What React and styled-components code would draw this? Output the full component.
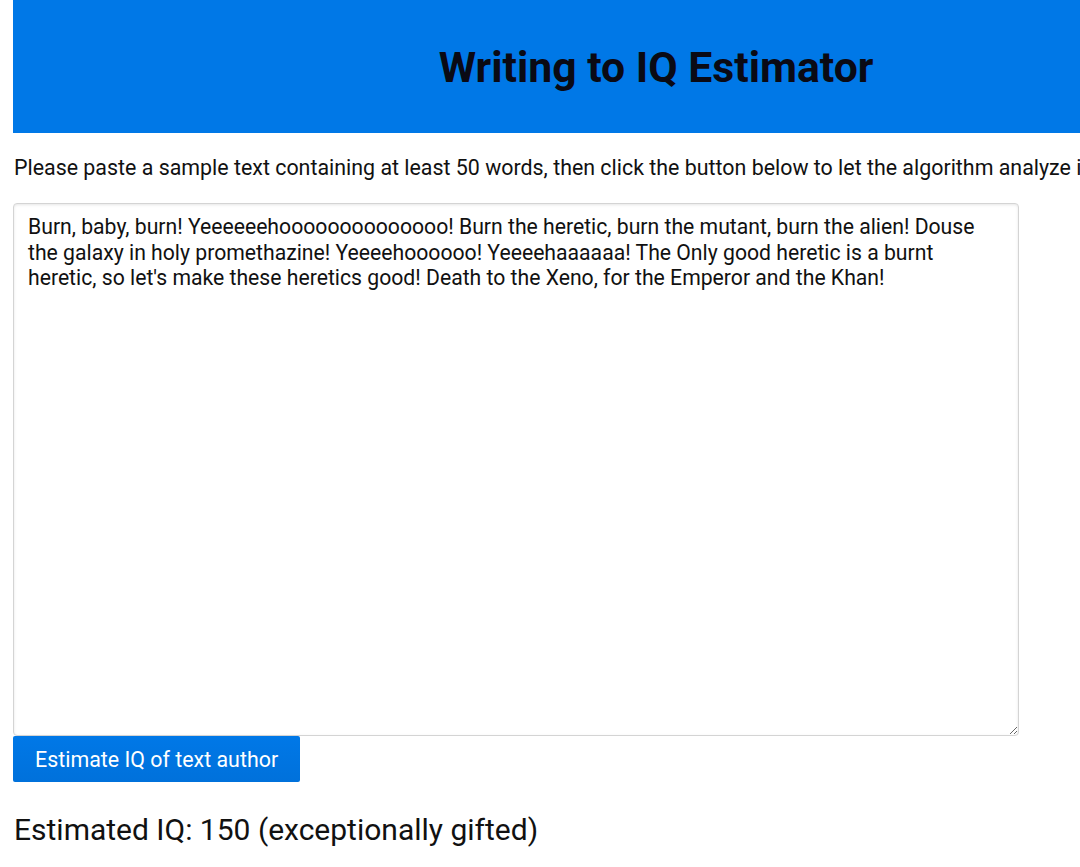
import React, { useState } from "react";
import styled, { createGlobalStyle } from "styled-components";

const GlobalStyle = createGlobalStyle`
  html, body {
    margin: 0;
    padding: 0;
    background: #ffffff;
    overflow: hidden;
  }
  body {
    font-family: Roboto, "Liberation Sans", Arial, sans-serif;
    color: #111;
  }
`;

const Page = styled.div`
  width: 1286px;
  padding-left: 13px;
`;

const Header = styled.header`
  height: 133px;
  background: #0078e7;
  display: flex;
  align-items: center;
  justify-content: center;
`;

const Title = styled.h1`
  margin: 0;
  font-size: 42.7px;
  font-weight: 700;
  color: #0a0a14;
`;

const Intro = styled.p`
  margin: 22px 0 23px 1px;
  font-size: 21.4px;
  white-space: nowrap;
  color: #111;
`;

const TextBox = styled.textarea`
  display: block;
  box-sizing: border-box;
  width: 1006px;
  height: 533px;
  padding: 10px 14px;
  border: 1px solid #d4d4d4;
  border-radius: 4px;
  box-shadow: inset 0 1px 3px rgba(0, 0, 0, 0.1);
  font-family: Roboto, "Liberation Sans", Arial, sans-serif;
  font-size: 21.2px;
  line-height: 25.5px;
  color: #111;
  resize: vertical;
  outline: none;
`;

const Button = styled.button`
  display: block;
  height: 46px;
  padding: 0 22px;
  border: none;
  border-radius: 2px;
  background: linear-gradient(#0078e7, #0071db);
  color: #fff;
  font-family: Roboto, "Liberation Sans", Arial, sans-serif;
  font-size: 21.4px;
  cursor: pointer;
`;

const Result = styled.div`
  margin: 30px 0 0 1px;
  font-size: 30px;
  color: #111;
`;

const sample =
  "Burn, baby, burn! Yeeeeeehoooooooooooooo! Burn the heretic, burn the mutant, burn the alien! Douse the galaxy in holy promethazine! Yeeeehoooooo! Yeeeehaaaaaa! The Only good heretic is a burnt heretic, so let's make these heretics good! Death to the Xeno, for the Emperor and the Khan!";

export default function App() {
  const [text, setText] = useState(sample);
  return (
    <Page>
      <GlobalStyle />
      <Header>
        <Title>Writing to IQ Estimator</Title>
      </Header>
      <Intro>
        Please paste a sample text containing at least 50 words, then click the
        button below to let the algorithm analyze it.
      </Intro>
      <TextBox value={text} onChange={(e) => setText(e.target.value)} />
      <Button>Estimate IQ of text author</Button>
      <Result>Estimated IQ: 150 (exceptionally gifted)</Result>
    </Page>
  );
}
